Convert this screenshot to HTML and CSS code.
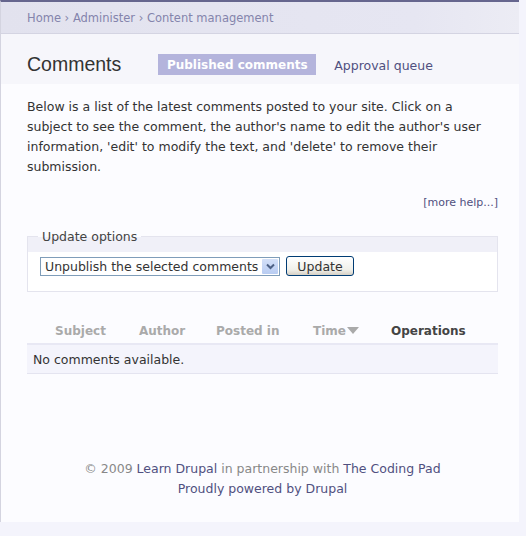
FILE: index.html
```html
<!DOCTYPE html>
<html>
  <head>
    <title>Comments | Learn Drupal</title>
    <link rel="stylesheet" href="styles.css">
  </head>
  <body>
    <div id="page">
      <header id="breadcrumb">
        <a href="#">Home</a> › <a href="#">Administer</a> › <a href="#">Content management</a>
      </header>

      <main id="content">
        <div class="title-row">
          <h1>Comments</h1>
          <ul class="tabs">
            <li><a href="#" class="active">Published comments</a></li>
            <li><a href="#">Approval queue</a></li>
          </ul>
        </div>

        <p class="help">Below is a list of the latest comments posted to your site. Click on a subject to see the comment, the author's name to edit the author's user information, 'edit' to modify the text, and 'delete' to remove their submission.</p>
        <div class="more-help"><a href="#">[more help...]</a></div>

        <fieldset class="options">
          <legend>Update options</legend>
          <div class="options-body">
            <div class="select-wrap">
              <select>
                <option>Unpublish the selected comments</option>
                <option>Delete the selected comments</option>
              </select>
              <span class="select-arrow">
                <svg width="9" height="7" viewBox="0 0 9 7"><path d="M1 1.5 L4.5 5 L8 1.5" fill="none" stroke="#4D6185" stroke-width="2"/></svg>
              </span>
            </div>
            <button type="button">Update</button>
          </div>
        </fieldset>

        <table class="comments">
          <thead>
            <tr>
              <th class="col-check"></th>
              <th class="col-subject"><a href="#">Subject</a></th>
              <th class="col-author"><a href="#">Author</a></th>
              <th class="col-posted"><a href="#">Posted in</a></th>
              <th class="col-time"><a href="#">Time<span class="arrow"></span></a></th>
              <th class="ops">Operations</th>
            </tr>
          </thead>
          <tbody>
            <tr>
              <td colspan="6">No comments available.</td>
            </tr>
          </tbody>
        </table>

        <footer id="footer">
          © 2009 <a href="#">Learn Drupal</a> in partnership with <a href="#">The Coding Pad</a><br>
          <a href="#">Proudly powered by Drupal</a>
        </footer>
      </main>
    </div>
  </body>
</html>
```

FILE: styles.css
```css
html, body
{
  margin: 0;
  padding: 0;
  background-color: #F4F4FC;
}

body
{
  font-family: "DejaVu Sans", Verdana, sans-serif;
  font-size: 12px;
  color: #444;
}

a
{
  color: #505080;
  text-decoration: none;
}

#page
{
  width: 518px;
  border-top: 2px solid #66668E;
  border-left: 1px solid #D4D4E0;
  background-color: #FAFAFE;
}

#breadcrumb
{
  height: 31px;
  line-height: 32px;
  padding-left: 26px;
  font-size: 11.5px;
  color: #8888AA;
  background: linear-gradient(to right, #E2E2EE, #E6E6F2 80%, #ECECF4);
  border-bottom: 1px solid #D4D4E2;
}

#breadcrumb a { color: #8484AC; }

#content
{
  padding: 0 21px 0 26px;
  height: 488px;
  background-color: #FCFCFF;
}

.title-row
{
  display: flex;
  align-items: center;
  height: 21px;
  margin: 0 -21px 0 -26px;
  padding: 20px 21px 9px 26px;
  background-color: #F6F6FB;
}

h1
{
  margin: 0 37px 0 0;
  font-family: "Liberation Sans", Arial, sans-serif;
  font-size: 19.5px;
  font-weight: normal;
  color: #333;
}

.tabs
{
  display: flex;
  align-items: center;
  margin: 0;
  padding: 0;
  list-style: none;
}

.tabs a
{
  display: block;
  height: 21px;
  line-height: 23px;
  padding: 0 12px;
  font-size: 12.5px;
  white-space: nowrap;
  color: #505080;
  margin-right: 6px;
}

.tabs a.active
{
  box-sizing: border-box;
  width: 158px;
  text-align: center;
  padding: 0;
  background-color: #B4B4DC;
  color: #FFF;
  font-weight: bold;
  font-size: 12px;
  margin-right: 6px;
}

.help
{
  margin: 13px 0 0 0;
  line-height: 20px;
  font-size: 12.5px;
  color: #333;
}

.more-help
{
  text-align: right;
  font-size: 11px;
  line-height: 13px;
  margin-top: 19px;
}

.options
{
  margin: 20px 0 0 0;
  padding: 0;
  border: 1px solid #E4E4EE;
  background: linear-gradient(to bottom, #F0F0F8 15px, #FFFFFF 15px);
}

.options legend
{
  margin-left: 10px;
  padding: 0 4px;
  font-size: 12.5px;
  color: #444;
}

.options-body
{
  display: flex;
  align-items: center;
  gap: 6px;
  padding: 12px 12px 15px 12px;
}

.select-wrap
{
  position: relative;
}

select
{
  appearance: none;
  display: block;
  width: 240px;
  height: 19px;
  font-family: inherit;
  font-size: 12.5px;
  color: #333;
  border: 1px solid #7F9DB9;
  border-radius: 0;
  background-color: #FFF;
  padding: 0 2px 0 4px;
}

.select-arrow
{
  position: absolute;
  top: 2px;
  right: 2px;
  width: 16px;
  height: 15px;
  display: flex;
  align-items: center;
  justify-content: center;
  background: linear-gradient(to bottom, #D4E0F8, #B8CCF2);
  border-radius: 1px;
  pointer-events: none;
}

button
{
  width: 68px;
  height: 20px;
  padding: 0;
  font-family: inherit;
  font-size: 12.5px;
  color: #333;
  border: 1px solid #003C74;
  border-radius: 3px;
  background: linear-gradient(to bottom, #FFFFFF, #F0F0EA 70%, #D6D0C5);
}

.comments
{
  width: 100%;
  margin-top: 32px;
  border-collapse: collapse;
  table-layout: fixed;
}

.comments th
{
  text-align: left;
  padding: 0 0 5px 0;
  font-size: 12px;
  font-weight: bold;
  border-bottom: 2px solid #E8E8F4;
}

.comments th a { color: #AAA; }
.comments th.col-check   { width: 28px; }
.comments th.col-subject { width: 84px; }
.comments th.col-author  { width: 77px; }
.comments th.col-posted  { width: 97px; }
.comments th.col-time    { width: 78px; }
.comments th.ops { color: #444; }

.arrow
{
  display: inline-block;
  width: 0;
  height: 0;
  margin-left: 1px;
  border-left: 6px solid transparent;
  border-right: 6px solid transparent;
  border-top: 7px solid #AAA;
  vertical-align: 1px;
}

.comments td
{
  height: 28px;
  padding: 0 0 0 6px;
  font-size: 12.5px;
  color: #333;
  background-color: #F4F4FC;
  border-bottom: 1px solid #E4E4F0;
}

#footer
{
  margin-top: 85px;
  text-align: center;
  line-height: 20px;
  font-size: 12.5px;
  color: #888;
}
```
